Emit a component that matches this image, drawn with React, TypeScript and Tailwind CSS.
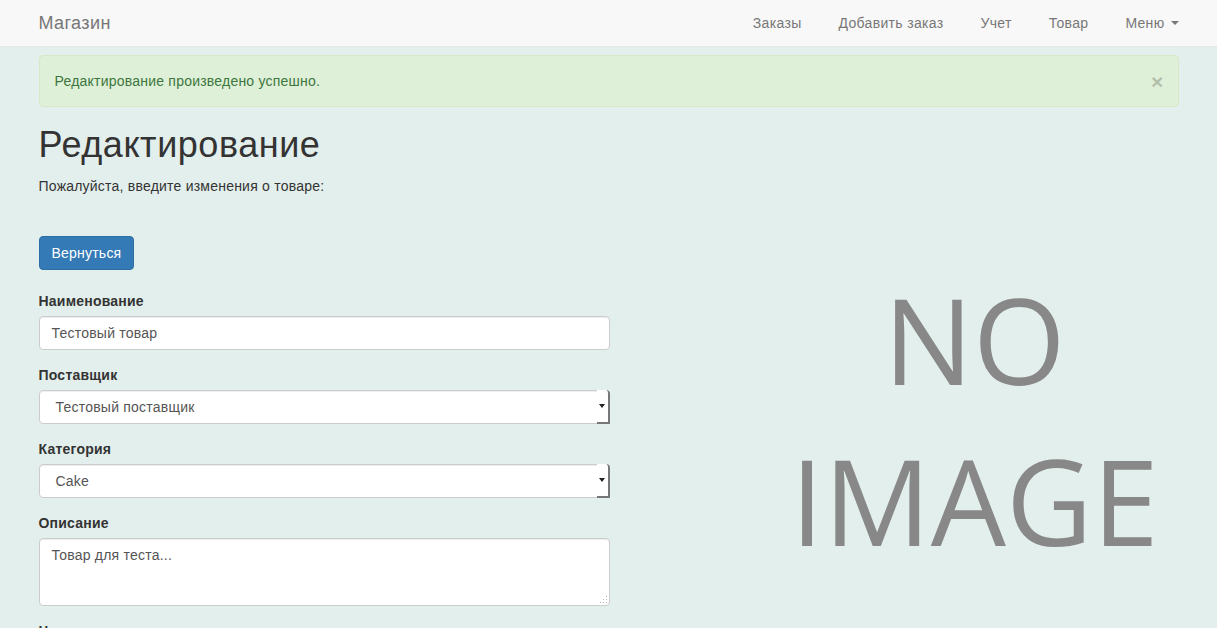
const navLinks = ['Заказы', 'Добавить заказ', 'Учет', 'Товар'];

function Field({ label, children }: { label: string; children: React.ReactNode }) {
  return (
    <div className="mb-[15px]">
      <label className="block font-bold text-[14px] leading-[20px] mb-[5px] text-[#333]">{label}</label>
      {children}
    </div>
  );
}

function SelectBox({ value }: { value: string }) {
  return (
    <div className="flex h-[34px] w-full bg-white border border-[#ccc] rounded-[4px] shadow-[inset_0_1px_1px_rgba(0,0,0,0.075)]">
      <div className="flex-1 flex items-center pl-[16px] text-[14px] text-[#555]">{value}</div>
      <div className="w-[13px] -mr-px -mt-px -mb-px flex items-center justify-center bg-white rounded-tr-[4px] border-r-2 border-b-2 border-[#777]">
        <svg width="6" height="4" viewBox="0 0 6 4"><path d="M0 0H6L3 4Z" fill="#222" /></svg>
      </div>
    </div>
  );
}

export default function App() {
  return (
    <div className="min-h-[628px] bg-[#e3efec] text-[#333] text-[14px] leading-[20px] tracking-[0.22px]" style={{ fontFamily: '"Liberation Sans", Arial, sans-serif' }}>
      <nav className="h-[47px] bg-[#f8f8f8] border-b border-[#e7e7e7]">
        <div className="w-[1140px] mx-auto h-full flex items-center justify-between">
          <span className="text-[18px] text-[#777] tracking-[0.4px]">Магазин</span>
          <ul className="flex h-full items-center -mr-[18.5px] tracking-[0.32px]">
            {navLinks.map(l => (
              <li key={l} className="px-[18.5px] text-[#777]">{l}</li>
            ))}
            <li className="px-[18.5px] text-[#777] flex items-center">
              Меню
              <svg className="ml-[6px]" width="8" height="4" viewBox="0 0 8 4"><path d="M0 0H8L4 4Z" fill="#777" /></svg>
            </li>
          </ul>
        </div>
      </nav>

      <div className="w-[1140px] mx-auto pt-[8px]">
        <div className="h-[52px] bg-[#dff0d8] border border-[#d6e9c6] rounded-[4px] text-[#3c763d] px-[15px] flex items-center justify-between mb-[18px]">
          <span>Редактирование произведено успешно.</span>
          <span className="text-[21px] font-bold text-black opacity-20 -mr-[1px] leading-none">×</span>
        </div>

        <h1 className="text-[36px] leading-[39.6px] font-normal text-[#333] tracking-[0.55px]">Редактирование</h1>
        <p className="mt-[11px]">Пожалуйста, введите изменения о товаре:</p>

        <div className="flex gap-[30px] mt-[40px]">
          <div className="w-[571px] shrink-0">
            <button className="h-[34px] px-[12px] bg-[#337ab7] border border-[#2e6da4] rounded-[4px] text-white text-[14px]">Вернуться</button>
            <div className="mt-[21px]">
              <Field label="Наименование">
                <div className="h-[34px] w-full bg-white border border-[#ccc] rounded-[4px] shadow-[inset_0_1px_1px_rgba(0,0,0,0.075)] px-[12px] flex items-center text-[#555]">Тестовый товар</div>
              </Field>
              <Field label="Поставщик">
                <SelectBox value="Тестовый поставщик" />
              </Field>
              <Field label="Категория">
                <SelectBox value="Cake" />
              </Field>
              <Field label="Описание">
                <div className="relative h-[68px] w-full bg-white border border-[#ccc] rounded-[4px] shadow-[inset_0_1px_1px_rgba(0,0,0,0.075)] px-[12px] py-[6px] text-[#555]">
                  Товар для теста...
                  <svg className="absolute right-[1px] bottom-[1px]" width="8" height="8" viewBox="0 0 8 8">
                    <g fill="#bbb">
                      <rect x="6" y="0" width="1" height="1" />
                      <rect x="3" y="3" width="1" height="1" />
                      <rect x="6" y="3" width="1" height="1" />
                      <rect x="0" y="6" width="1" height="1" />
                      <rect x="3" y="6" width="1" height="1" />
                      <rect x="6" y="6" width="1" height="1" />
                    </g>
                  </svg>
                </div>
              </Field>
              <Field label="Цена">
                <div className="h-[34px] w-full bg-white border border-[#ccc] rounded-[4px]" />
              </Field>
            </div>
          </div>
          <div className="flex-1 min-w-0">
            <div className="ml-[125px] w-[420px] mt-[23px] text-center text-[#888] text-[119px] leading-[161px] tracking-normal" style={{ fontFamily: '"Open Sans", sans-serif' }}>
              <div>NO</div>
              <div>IMAGE</div>
            </div>
          </div>
        </div>
      </div>
    </div>
  );
}
